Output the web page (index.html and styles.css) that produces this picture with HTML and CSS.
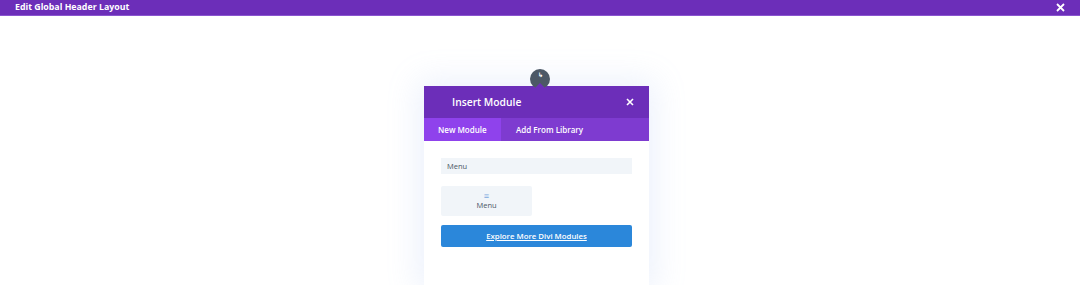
FILE: index.html
```html
<!DOCTYPE html>
<html>
<head>
<meta charset="utf-8">
<link rel="stylesheet" href="styles.css">
</head>
<body>
<div class="topbar">
  <span class="topbar-title">Edit Global Header Layout</span>
  <svg class="topbar-close" width="9" height="9" viewBox="0 0 9 9"><path d="M1 1L8 8M8 1L1 8" stroke="#fff" stroke-width="1.8"/></svg>
</div>
<div class="canvas">
  <div class="modal">
    <div class="anchor"><span class="anchor-glyph">↳</span></div>
    <div class="modal-head">
      <span class="modal-title">Insert Module</span>
      <svg class="modal-close" width="8" height="8" viewBox="0 0 8 8"><path d="M1 1L7 7M7 1L1 7" stroke="#fff" stroke-width="1.6"/></svg>
    </div>
    <div class="tabs">
      <span class="tab active">New Module</span>
      <span class="tab">Add From Library</span>
    </div>
    <div class="modal-body">
      <div class="search">Menu</div>
      <div class="tiles">
        <div class="tile">
          <span class="tile-icon">≡</span>
          <span class="tile-label">Menu</span>
        </div>
      </div>
      <a class="explore">Explore More Divi Modules</a>
    </div>
  </div>
</div>
</body>
</html>
```
FILE: styles.css
```css
* { box-sizing: border-box; }
html, body { margin: 0; padding: 0; background: #fff; overflow: hidden; }
body { font-family: "Open Sans", "Liberation Sans", sans-serif; width: 1080px; height: 285px; }

.topbar {
  height: 16px;
  background: #6c2eb9;
  border-bottom: 1px solid #8a55cf;
  display: flex;
  align-items: center;
  justify-content: space-between;
  padding: 0 15px 0 15px;
  color: #fff;
}
.topbar-title { font-size: 8.8px; font-weight: 700; line-height: 15px; }
.topbar-close { display: block; }

.canvas { padding: 70px 0 0 424px; }

.modal {
  position: relative;
  width: 225px;
  height: 200px;
  background: #fff;
  box-shadow: 0 0 30px 6px rgba(150, 180, 240, 0.18);
}
.anchor {
  position: absolute;
  left: 106px;
  top: -17px;
  width: 20px;
  height: 20px;
  border-radius: 50%;
  background: #4c5866;
  display: flex;
  justify-content: center;
  color: #fff;
}
.anchor::after {
  content: "";
  position: absolute;
  left: 1px;
  bottom: -3px;
  border-left: 9px solid transparent;
  border-right: 9px solid transparent;
  border-bottom: 9px solid #6c2eb9;
}
.anchor-glyph { font-size: 6px; line-height: 12px; font-weight: 700; }

.modal-head {
  height: 32px;
  background: #6c2eb9;
  display: flex;
  align-items: center;
  justify-content: space-between;
  padding: 0 15px 0 28px;
  color: #fff;
}
.modal-title { font-size: 10.3px; font-weight: 600; }
.modal-close { display: block; }

.tabs {
  height: 23px;
  background: #7e3bd0;
  display: flex;
  color: #fff;
}
.tab {
  font-size: 8px;
  font-weight: 600;
  display: flex;
  align-items: center;
  padding: 0 15px;
  white-space: nowrap;
}
.tab.active { background: #8f42ec; width: 77px; padding: 0 0 0 14px; }

.modal-body { padding: 17px 17px 0 17px; }
.search {
  height: 16px;
  background: #f1f5f9;
  font-size: 7.5px;
  color: #4c5866;
  padding-left: 6px;
  line-height: 16px;
}
.tiles { margin-top: 12px; display: flex; }
.tile {
  width: 91px;
  height: 30px;
  background: #f1f5f9;
  border-radius: 2px;
  display: flex;
  flex-direction: column;
  align-items: center;
  justify-content: center;
  color: #4c5866;
}
.tile-icon { font-size: 9px; line-height: 9px; color: #7aa8dd; }
.tile-label { font-size: 7.5px; line-height: 11px; }

.explore {
  margin-top: 9px;
  display: flex;
  align-items: center;
  justify-content: center;
  height: 22px;
  background: #2b87da;
  border-radius: 2px;
  color: #fff;
  font-size: 7.8px;
  font-weight: 600;
  text-decoration: underline;
}
```
